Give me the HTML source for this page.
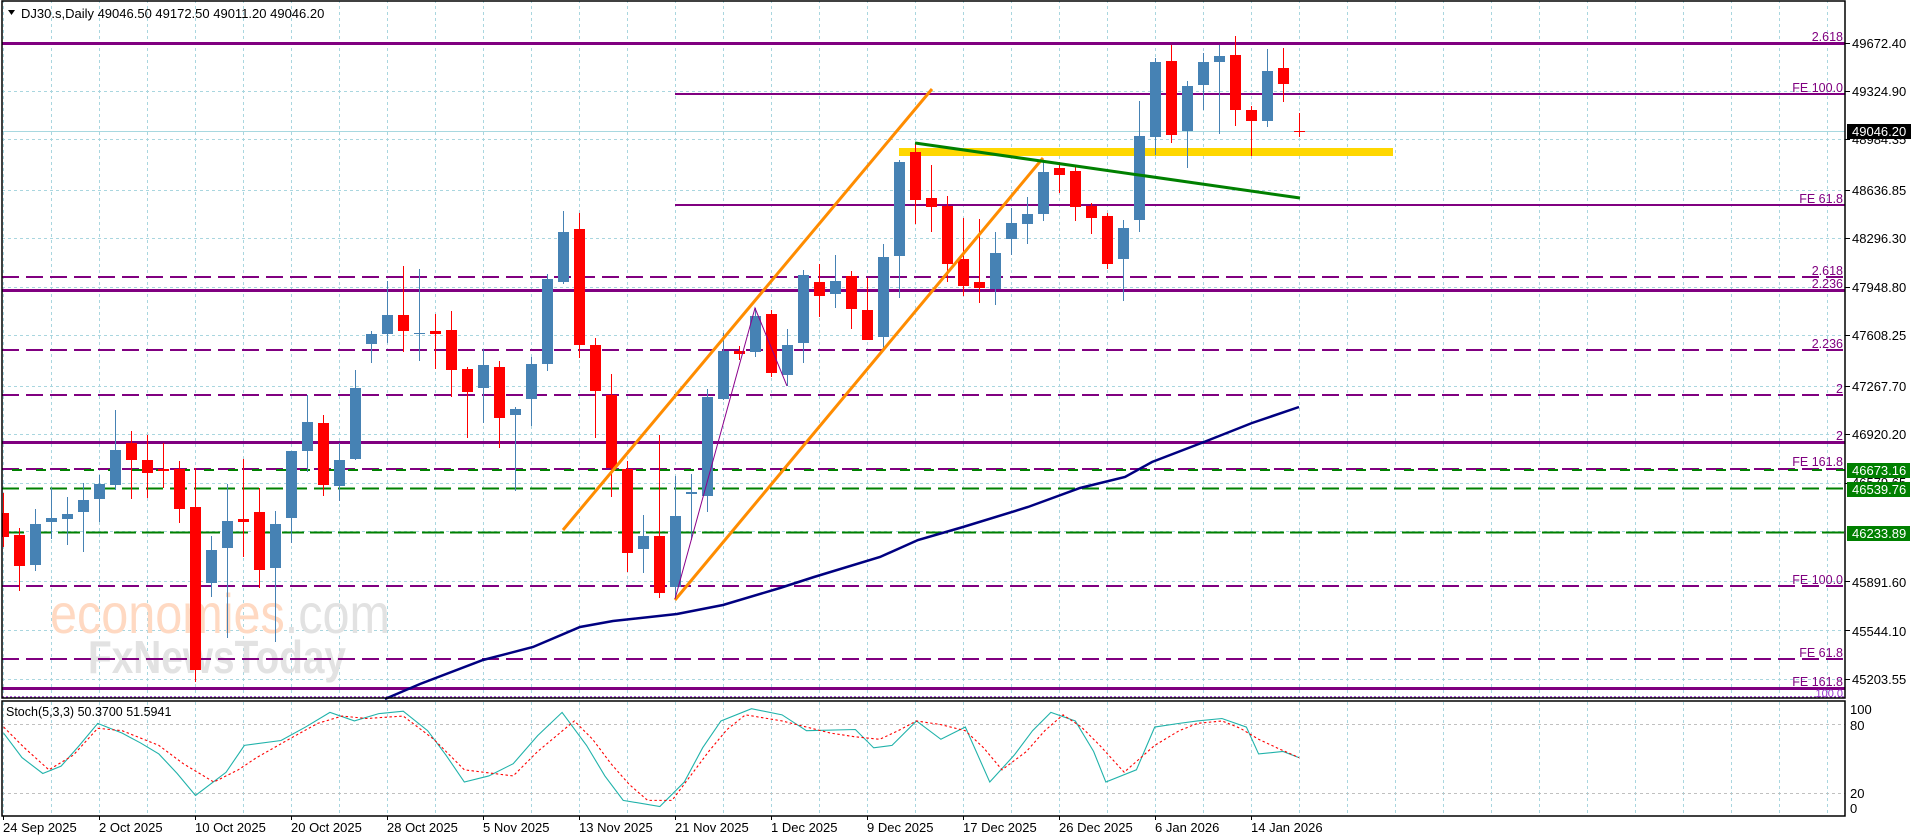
<!DOCTYPE html>
<html><head><meta charset="utf-8"><style>
html,body{margin:0;padding:0;background:#fff;}
svg{display:block;font-family:"Liberation Sans",sans-serif;}
</style></head><body>
<svg width="1916" height="840" viewBox="0 0 1916 840" xmlns="http://www.w3.org/2000/svg">
<rect width="1916" height="840" fill="#fff"/>
<defs>
<pattern id="vg" x="3" y="0" width="48" height="840" patternUnits="userSpaceOnUse">
<line x1="0.5" y1="0" x2="0.5" y2="840" stroke="#a9d6df" stroke-width="1" stroke-dasharray="3 3"/>
</pattern>
</defs>
<!-- vertical grid -->
<rect x="3" y="1" width="1842" height="697" fill="url(#vg)"/>
<rect x="3" y="702" width="1842" height="114" fill="url(#vg)"/>
<!-- horizontal grid -->
<g stroke="#a9d6df" stroke-width="1" stroke-dasharray="3 3" shape-rendering="crispEdges">
<line x1="2" x2="1845" y1="43.5" y2="43.5"/><line x1="2" x2="1845" y1="91.5" y2="91.5"/>
<line x1="2" x2="1845" y1="139.5" y2="139.5"/><line x1="2" x2="1845" y1="190.5" y2="190.5"/>
<line x1="2" x2="1845" y1="238.5" y2="238.5"/><line x1="2" x2="1845" y1="287.5" y2="287.5"/>
<line x1="2" x2="1845" y1="335.5" y2="335.5"/><line x1="2" x2="1845" y1="386.5" y2="386.5"/>
<line x1="2" x2="1845" y1="434.5" y2="434.5"/><line x1="2" x2="1845" y1="483.5" y2="483.5"/>
<line x1="2" x2="1845" y1="531.5" y2="531.5"/><line x1="2" x2="1845" y1="581.5" y2="581.5"/>
<line x1="2" x2="1845" y1="630.5" y2="630.5"/><line x1="2" x2="1845" y1="679.5" y2="679.5"/>
</g>
<g stroke="#c0c0c0" stroke-width="1" stroke-dasharray="3 3">
<line x1="2" x2="1845" y1="724.5" y2="724.5"/><line x1="2" x2="1845" y1="793.5" y2="793.5"/>
</g>

<!-- watermark -->
<text x="50" y="633" font-size="56" textLength="340" lengthAdjust="spacingAndGlyphs" fill="#ffd9c2"><tspan>economies</tspan><tspan fill="#e2e2e2">.com</tspan></text>
<text x="88" y="673" font-size="46" textLength="258" lengthAdjust="spacingAndGlyphs" fill="#e2e2e2" font-weight="bold">FxNewsToday</text>

<!-- cyan current price line -->
<line x1="2" x2="1845" y1="131.5" y2="131.5" stroke="#a8d8e0" stroke-width="1"/>

<!-- purple levels -->
<g stroke="#800080" fill="none">
<line x1="2" x2="1845" y1="43.5" y2="43.5" stroke-width="3"/>
<line x1="2" x2="1845" y1="290.5" y2="290.5" stroke-width="3"/>
<line x1="2" x2="1845" y1="442.5" y2="442.5" stroke-width="3"/>
<line x1="2" x2="1845" y1="688.5" y2="688.5" stroke-width="3"/>
<line x1="675" x2="1845" y1="94" y2="94" stroke-width="2"/>
<line x1="675" x2="1845" y1="205" y2="205" stroke-width="2"/>
<g stroke-width="2" stroke-dasharray="17 7">
<line x1="2" x2="1845" y1="277" y2="277"/>
<line x1="2" x2="1845" y1="350" y2="350"/>
<line x1="2" x2="1845" y1="395" y2="395"/>
<line x1="2" x2="1845" y1="469" y2="469"/>
<line x1="2" x2="1845" y1="586" y2="586"/>
<line x1="2" x2="1845" y1="659" y2="659"/>
</g>
<line x1="2" x2="1845" y1="697" y2="697" stroke="#9932cc" stroke-width="1.5" stroke-dasharray="2 2"/>
</g>
<g stroke="#008000" stroke-width="2" fill="none">
<line x1="12" x2="1845" y1="470" y2="470" stroke-dasharray="10 14"/>
<line x1="2" x2="1845" y1="488.5" y2="488.5" stroke-dasharray="17 7"/>
<line x1="2" x2="1845" y1="532.5" y2="532.5" stroke-dasharray="22 6"/>
</g>

<!-- MA -->
<polyline fill="none" stroke="#000080" stroke-width="2.5" points="385,699 420,684 483,660 533,647 580,627 613,621 677,614 723,605 780,588 814,577 880,557 918,540 963,527 1028,507 1080,488 1125,477 1152,462 1204,442 1252,423 1299,407"/>

<!-- yellow band -->
<rect x="899" y="148" width="494" height="8" fill="#ffd700"/>

<!-- candles -->
<g shape-rendering="crispEdges">
<g stroke="#4682b4" fill="#4682b4" stroke-width="1">
<line x1="35.5" x2="35.5" y1="509" y2="571"/><rect x="30" y="524" width="11" height="41" stroke="none"/>
<line x1="51.5" x2="51.5" y1="488" y2="539"/><rect x="46" y="518" width="11" height="4" stroke="none"/>
<line x1="67.5" x2="67.5" y1="497" y2="545"/><rect x="62" y="514" width="11" height="5" stroke="none"/>
<line x1="83.5" x2="83.5" y1="483" y2="552"/><rect x="78" y="500" width="11" height="12" stroke="none"/>
<line x1="99.5" x2="99.5" y1="475" y2="522"/><rect x="94" y="484" width="11" height="15" stroke="none"/>
<line x1="115.5" x2="115.5" y1="410" y2="490"/><rect x="110" y="450" width="11" height="35" stroke="none"/>
<line x1="211.5" x2="211.5" y1="536" y2="597"/><rect x="206" y="550" width="11" height="33" stroke="none"/>
<line x1="227.5" x2="227.5" y1="484" y2="638"/><rect x="222" y="521" width="11" height="27" stroke="none"/>
<line x1="275.5" x2="275.5" y1="511" y2="642"/><rect x="270" y="524" width="11" height="44" stroke="none"/>
<line x1="291.5" x2="291.5" y1="451" y2="543"/><rect x="286" y="451" width="11" height="67" stroke="none"/>
<line x1="307.5" x2="307.5" y1="395" y2="472"/><rect x="302" y="422" width="11" height="29" stroke="none"/>
<line x1="339.5" x2="339.5" y1="443" y2="501"/><rect x="334" y="460" width="11" height="26" stroke="none"/>
<line x1="355.5" x2="355.5" y1="370" y2="460"/><rect x="350" y="388" width="11" height="71" stroke="none"/>
<line x1="371.5" x2="371.5" y1="331" y2="363"/><rect x="366" y="334" width="11" height="10" stroke="none"/>
<line x1="387.5" x2="387.5" y1="281" y2="343"/><rect x="382" y="315" width="11" height="19" stroke="none"/>
<line x1="419.5" x2="419.5" y1="269" y2="361"/><rect x="414" y="333" width="11" height="1" stroke="none"/>
<line x1="483.5" x2="483.5" y1="349" y2="423"/><rect x="478" y="365" width="11" height="23" stroke="none"/>
<line x1="515.5" x2="515.5" y1="407" y2="491"/><rect x="510" y="409" width="11" height="6" stroke="none"/>
<line x1="531.5" x2="531.5" y1="357" y2="426"/><rect x="526" y="364" width="11" height="35" stroke="none"/>
<line x1="547.5" x2="547.5" y1="274" y2="371"/><rect x="542" y="279" width="11" height="85" stroke="none"/>
<line x1="563.5" x2="563.5" y1="211" y2="284"/><rect x="558" y="232" width="11" height="50" stroke="none"/>
<line x1="643.5" x2="643.5" y1="515" y2="573"/><rect x="638" y="536" width="11" height="13" stroke="none"/>
<line x1="675.5" x2="675.5" y1="476" y2="599"/><rect x="670" y="516" width="11" height="71" stroke="none"/>
<line x1="691.5" x2="691.5" y1="474" y2="540"/><rect x="686" y="492" width="11" height="2" stroke="none"/>
<line x1="707.5" x2="707.5" y1="389" y2="512"/><rect x="702" y="397" width="11" height="99" stroke="none"/>
<line x1="723.5" x2="723.5" y1="333" y2="400"/><rect x="718" y="351" width="11" height="48" stroke="none"/>
<line x1="755.5" x2="755.5" y1="308" y2="357"/><rect x="750" y="316" width="11" height="36" stroke="none"/>
<line x1="787.5" x2="787.5" y1="329" y2="386"/><rect x="782" y="345" width="11" height="30" stroke="none"/>
<line x1="803.5" x2="803.5" y1="270" y2="363"/><rect x="798" y="275" width="11" height="68" stroke="none"/>
<line x1="835.5" x2="835.5" y1="255" y2="308"/><rect x="830" y="281" width="11" height="13" stroke="none"/>
<line x1="883.5" x2="883.5" y1="244" y2="348"/><rect x="878" y="257" width="11" height="80" stroke="none"/>
<line x1="899.5" x2="899.5" y1="160" y2="298"/><rect x="894" y="162" width="11" height="94" stroke="none"/>
<line x1="995.5" x2="995.5" y1="232" y2="305"/><rect x="990" y="253" width="11" height="36" stroke="none"/>
<line x1="1011.5" x2="1011.5" y1="208" y2="255"/><rect x="1006" y="223" width="11" height="16" stroke="none"/>
<line x1="1027.5" x2="1027.5" y1="197" y2="244"/><rect x="1022" y="214" width="11" height="10" stroke="none"/>
<line x1="1043.5" x2="1043.5" y1="161" y2="221"/><rect x="1038" y="172" width="11" height="42" stroke="none"/>
<line x1="1123.5" x2="1123.5" y1="220" y2="301"/><rect x="1118" y="228" width="11" height="31" stroke="none"/>
<line x1="1139.5" x2="1139.5" y1="101" y2="232"/><rect x="1134" y="136" width="11" height="84" stroke="none"/>
<line x1="1155.5" x2="1155.5" y1="58" y2="155"/><rect x="1150" y="62" width="11" height="75" stroke="none"/>
<line x1="1187.5" x2="1187.5" y1="81" y2="168"/><rect x="1182" y="86" width="11" height="45" stroke="none"/>
<line x1="1203.5" x2="1203.5" y1="53" y2="110"/><rect x="1198" y="62" width="11" height="23" stroke="none"/>
<line x1="1219.5" x2="1219.5" y1="45" y2="134"/><rect x="1214" y="56" width="11" height="6" stroke="none"/>
<line x1="1267.5" x2="1267.5" y1="49" y2="127"/><rect x="1262" y="71" width="11" height="50" stroke="none"/>
</g>
<g stroke="#ff0000" fill="#ff0000" stroke-width="1">
<line x1="3.5" x2="3.5" y1="493" y2="547"/><rect x="2" y="513" width="7" height="24" stroke="none"/>
<line x1="19.5" x2="19.5" y1="528" y2="591"/><rect x="14" y="535" width="11" height="31" stroke="none"/>
<line x1="131.5" x2="131.5" y1="431" y2="499"/><rect x="126" y="443" width="11" height="17" stroke="none"/>
<line x1="147.5" x2="147.5" y1="435" y2="498"/><rect x="142" y="460" width="11" height="13" stroke="none"/>
<line x1="163.5" x2="163.5" y1="443" y2="488"/><rect x="158" y="469" width="11" height="2" stroke="none"/>
<line x1="179.5" x2="179.5" y1="461" y2="523"/><rect x="174" y="469" width="11" height="40" stroke="none"/>
<line x1="195.5" x2="195.5" y1="468" y2="682"/><rect x="190" y="507" width="11" height="163" stroke="none"/>
<line x1="243.5" x2="243.5" y1="459" y2="557"/><rect x="238" y="519" width="11" height="3" stroke="none"/>
<line x1="259.5" x2="259.5" y1="488" y2="588"/><rect x="254" y="512" width="11" height="58" stroke="none"/>
<line x1="323.5" x2="323.5" y1="415" y2="496"/><rect x="318" y="423" width="11" height="62" stroke="none"/>
<line x1="403.5" x2="403.5" y1="266" y2="352"/><rect x="398" y="315" width="11" height="16" stroke="none"/>
<line x1="435.5" x2="435.5" y1="314" y2="369"/><rect x="430" y="331" width="11" height="3" stroke="none"/>
<line x1="451.5" x2="451.5" y1="311" y2="397"/><rect x="446" y="330" width="11" height="40" stroke="none"/>
<line x1="467.5" x2="467.5" y1="367" y2="438"/><rect x="462" y="369" width="11" height="23" stroke="none"/>
<line x1="499.5" x2="499.5" y1="361" y2="448"/><rect x="494" y="367" width="11" height="51" stroke="none"/>
<line x1="579.5" x2="579.5" y1="213" y2="358"/><rect x="574" y="229" width="11" height="116" stroke="none"/>
<line x1="595.5" x2="595.5" y1="338" y2="438"/><rect x="590" y="345" width="11" height="46" stroke="none"/>
<line x1="611.5" x2="611.5" y1="374" y2="497"/><rect x="606" y="395" width="11" height="73" stroke="none"/>
<line x1="627.5" x2="627.5" y1="461" y2="572"/><rect x="622" y="469" width="11" height="84" stroke="none"/>
<line x1="659.5" x2="659.5" y1="435" y2="598"/><rect x="654" y="536" width="11" height="57" stroke="none"/>
<line x1="739.5" x2="739.5" y1="346" y2="360"/><rect x="734" y="351" width="11" height="3" stroke="none"/>
<line x1="771.5" x2="771.5" y1="310" y2="377"/><rect x="766" y="314" width="11" height="59" stroke="none"/>
<line x1="819.5" x2="819.5" y1="264" y2="317"/><rect x="814" y="282" width="11" height="14" stroke="none"/>
<line x1="851.5" x2="851.5" y1="271" y2="329"/><rect x="846" y="276" width="11" height="33" stroke="none"/>
<line x1="867.5" x2="867.5" y1="278" y2="340"/><rect x="862" y="310" width="11" height="30" stroke="none"/>
<line x1="915.5" x2="915.5" y1="143" y2="224"/><rect x="910" y="152" width="11" height="48" stroke="none"/>
<line x1="931.5" x2="931.5" y1="165" y2="232"/><rect x="926" y="198" width="11" height="9" stroke="none"/>
<line x1="947.5" x2="947.5" y1="196" y2="282"/><rect x="942" y="206" width="11" height="58" stroke="none"/>
<line x1="963.5" x2="963.5" y1="218" y2="296"/><rect x="958" y="259" width="11" height="27" stroke="none"/>
<line x1="979.5" x2="979.5" y1="219" y2="303"/><rect x="974" y="282" width="11" height="6" stroke="none"/>
<line x1="1059.5" x2="1059.5" y1="162" y2="193"/><rect x="1054" y="168" width="11" height="7" stroke="none"/>
<line x1="1075.5" x2="1075.5" y1="167" y2="221"/><rect x="1070" y="171" width="11" height="36" stroke="none"/>
<line x1="1091.5" x2="1091.5" y1="203" y2="234"/><rect x="1086" y="206" width="11" height="12" stroke="none"/>
<line x1="1107.5" x2="1107.5" y1="213" y2="269"/><rect x="1102" y="216" width="11" height="48" stroke="none"/>
<line x1="1171.5" x2="1171.5" y1="45" y2="143"/><rect x="1166" y="61" width="11" height="74" stroke="none"/>
<line x1="1235.5" x2="1235.5" y1="36" y2="126"/><rect x="1230" y="55" width="11" height="55" stroke="none"/>
<line x1="1251.5" x2="1251.5" y1="106" y2="156"/><rect x="1246" y="110" width="11" height="11" stroke="none"/>
<line x1="1283.5" x2="1283.5" y1="48" y2="102"/><rect x="1278" y="68" width="11" height="16" stroke="none"/>
<line x1="1299.5" x2="1299.5" y1="113" y2="137"/><rect x="1294" y="131" width="11" height="1" stroke="none"/>
</g>
</g>

<!-- trend lines -->
<line x1="563" y1="530" x2="932" y2="89" stroke="#ff8c00" stroke-width="3"/>
<line x1="675" y1="600" x2="1043" y2="158" stroke="#ff8c00" stroke-width="3"/>
<polyline points="675,599 755,308 787,386" fill="none" stroke="#8b008b" stroke-width="1"/>
<line x1="915" y1="143" x2="1300" y2="198" stroke="#008000" stroke-width="3"/>

<!-- level labels -->
<g font-size="12.5" fill="#800080" text-anchor="end">
<text x="1843" y="41">2.618</text>
<text x="1843" y="92">FE 100.0</text>
<text x="1843" y="203">FE 61.8</text>
<text x="1843" y="275">2.618</text>
<text x="1843" y="288">2.236</text>
<text x="1843" y="348">2.236</text>
<text x="1843" y="393">2</text>
<text x="1843" y="440">2</text>
<text x="1843" y="466">FE 161.8</text>
<text x="1843" y="584">FE 100.0</text>
<text x="1843" y="657">FE 61.8</text>
<text x="1843" y="686">FE 161.8</text>
<text x="1843" y="697" fill="#9932cc" font-size="11">100.0</text>
</g>

<!-- title -->
<path d="M8,10 L15,10 L11.5,15 Z" fill="#000"/>
<text x="21" y="18" font-size="13" fill="#000">DJ30.s,Daily  49046.50 49172.50 49011.20 49046.20</text>

<!-- frames -->
<g fill="none" stroke="#000" stroke-width="1.5">
<rect x="2" y="1" width="1843" height="697"/>
<rect x="2" y="701" width="1843" height="115"/>
</g>

<!-- price axis -->
<g stroke="#000" stroke-width="1">
<line x1="1845" x2="1850" y1="43.5" y2="43.5"/><line x1="1845" x2="1850" y1="91.5" y2="91.5"/>
<line x1="1845" x2="1850" y1="139.5" y2="139.5"/><line x1="1845" x2="1850" y1="190.5" y2="190.5"/>
<line x1="1845" x2="1850" y1="238.5" y2="238.5"/><line x1="1845" x2="1850" y1="287.5" y2="287.5"/>
<line x1="1845" x2="1850" y1="335.5" y2="335.5"/><line x1="1845" x2="1850" y1="386.5" y2="386.5"/>
<line x1="1845" x2="1850" y1="434.5" y2="434.5"/><line x1="1845" x2="1850" y1="483.5" y2="483.5"/>
<line x1="1845" x2="1850" y1="581.5" y2="581.5"/><line x1="1845" x2="1850" y1="630.5" y2="630.5"/>
<line x1="1845" x2="1850" y1="679.5" y2="679.5"/>
</g>
<g font-size="13" fill="#000">
<text x="1852" y="48">49672.40</text>
<text x="1852" y="96">49324.90</text>
<text x="1852" y="144">48984.35</text>
<text x="1852" y="195">48636.85</text>
<text x="1852" y="243">48296.30</text>
<text x="1852" y="292">47948.80</text>
<text x="1852" y="340">47608.25</text>
<text x="1852" y="391">47267.70</text>
<text x="1852" y="439">46920.20</text>
<text x="1852" y="487">46579.65</text>
<text x="1852" y="587">45891.60</text>
<text x="1852" y="636">45544.10</text>
<text x="1852" y="684">45203.55</text>
</g>
<rect x="1847" y="124" width="64" height="15" fill="#000"/>
<text x="1852" y="136" font-size="13" fill="#fff">49046.20</text>
<rect x="1847" y="463" width="63" height="15" fill="#008000"/>
<text x="1852" y="475" font-size="13" fill="#fff">46673.16</text>
<rect x="1847" y="482" width="63" height="15" fill="#008000"/>
<text x="1852" y="494" font-size="13" fill="#fff">46539.76</text>
<rect x="1847" y="526" width="63" height="15" fill="#008000"/>
<text x="1852" y="538" font-size="13" fill="#fff">46233.89</text>

<!-- stoch -->
<text x="6" y="716" font-size="12.5" fill="#000">Stoch(5,3,3) 50.3700 51.5941</text>
<g transform="scale(1.22194)" fill="none" stroke-width="0.9">
<polyline stroke="#20b2aa" points="3,600 18,620 35,633 50,627 65,610 80,592 100,600 115,608 130,617 145,633 160,651 185,632 200,610 230,606 250,595 270,583 290,590 310,584 330,582 350,598 365,618 380,640 400,635 420,625 440,602 460,583 480,610 495,635 510,655 540,660 560,640 575,612 590,590 615,580 640,585 660,598 700,597 715,612 730,610 750,590 770,605 790,595 810,640 830,618 845,598 860,583 880,590 895,615 905,640 930,630 945,595 965,592 980,590 1000,588 1020,595 1030,617 1050,615 1063,620"/>
<polyline stroke="#ff0000" stroke-dasharray="2 2" points="3,595 20,612 40,630 60,618 80,596 100,598 130,610 150,625 175,640 195,630 210,620 240,603 260,592 280,586 300,588 330,586 355,605 380,630 420,635 440,615 470,590 485,605 500,625 515,642 530,655 550,655 565,635 580,615 595,597 610,585 640,590 660,595 680,600 700,603 720,605 735,598 750,590 770,593 790,598 805,612 820,630 840,615 855,598 870,585 885,595 900,610 920,632 945,610 965,598 980,592 1000,590 1015,596 1030,605 1045,612 1063,620"/>
</g>
<g font-size="13" fill="#000">
<text x="1850" y="714">100</text>
<text x="1850" y="730">80</text>
<text x="1850" y="798">20</text>
<text x="1850" y="813">0</text>
</g>

<!-- date axis -->
<g stroke="#000" stroke-width="1">
<line x1="3.5" x2="3.5" y1="816" y2="820"/><line x1="99.5" x2="99.5" y1="816" y2="820"/>
<line x1="195.5" x2="195.5" y1="816" y2="820"/><line x1="291.5" x2="291.5" y1="816" y2="820"/>
<line x1="387.5" x2="387.5" y1="816" y2="820"/><line x1="483.5" x2="483.5" y1="816" y2="820"/>
<line x1="579.5" x2="579.5" y1="816" y2="820"/><line x1="675.5" x2="675.5" y1="816" y2="820"/>
<line x1="771.5" x2="771.5" y1="816" y2="820"/><line x1="867.5" x2="867.5" y1="816" y2="820"/>
<line x1="963.5" x2="963.5" y1="816" y2="820"/><line x1="1059.5" x2="1059.5" y1="816" y2="820"/>
<line x1="1155.5" x2="1155.5" y1="816" y2="820"/><line x1="1251.5" x2="1251.5" y1="816" y2="820"/>
</g>
<g font-size="13" fill="#000">
<text x="3" y="832">24 Sep 2025</text>
<text x="99" y="832">2 Oct 2025</text>
<text x="195" y="832">10 Oct 2025</text>
<text x="291" y="832">20 Oct 2025</text>
<text x="387" y="832">28 Oct 2025</text>
<text x="483" y="832">5 Nov 2025</text>
<text x="579" y="832">13 Nov 2025</text>
<text x="675" y="832">21 Nov 2025</text>
<text x="771" y="832">1 Dec 2025</text>
<text x="867" y="832">9 Dec 2025</text>
<text x="963" y="832">17 Dec 2025</text>
<text x="1059" y="832">26 Dec 2025</text>
<text x="1155" y="832">6 Jan 2026</text>
<text x="1251" y="832">14 Jan 2026</text>
</g>
</svg>
</body></html>
